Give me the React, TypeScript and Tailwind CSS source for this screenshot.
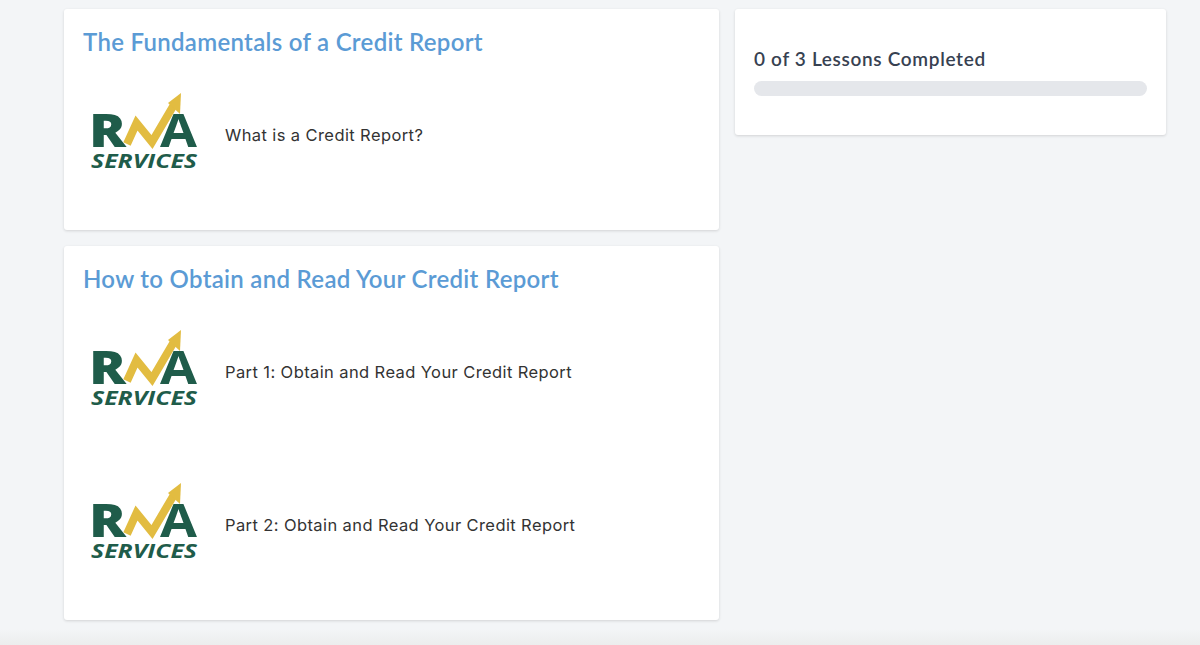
const RnaLogo = () => {
  return (
    <svg width="120" height="90" viewBox="0 0 120 90" className="shrink-0">
      <text x="5" y="56" fontFamily="'Open Sans', sans-serif" fontWeight="800" fontSize="46" fill="#1f5c4a" textLength="37" lengthAdjust="spacingAndGlyphs">R</text>
      <text x="76" y="56" fontFamily="'Open Sans', sans-serif" fontWeight="700" fontSize="46" fill="#1f5c4a" textLength="37" lengthAdjust="spacingAndGlyphs">A</text>
      <path d="M43 53 L52.5 32 L68 51 L91 12" fill="none" stroke="#e2bc41" strokeWidth="8" strokeLinejoin="miter" />
      <path d="M97 2 L96 23 L84 12 Z" fill="#e2bc41" />
      <text x="7" y="77" fontFamily="'Open Sans', sans-serif" fontWeight="700" fontStyle="italic" fontSize="20" fill="#1f5c4a" textLength="106" lengthAdjust="spacingAndGlyphs">SERVICES</text>
    </svg>
  );
};

const LessonRow = ({ title }: { title: string }) => {
  return (
    <div className="flex h-[153px] items-center gap-[21px] pl-[20px]">
      <RnaLogo />
      <span className="-mt-[1px] text-[16.5px] text-[#333333] font-['Inter',sans-serif] tracking-[0.4px]">{title}</span>
    </div>
  );
};

const SectionCard = ({ title, lessons }: { title: string; lessons: string[] }) => {
  return (
    <section className="rounded-[3px] bg-white shadow-[0_1px_3px_rgba(0,0,0,0.14)] pb-[18px]">
      <h2 className="h-[50px] pl-[19px] pt-[16px] text-[24px] leading-[34px] font-semibold text-[#5b9bd5] font-['Lato',sans-serif] tracking-[0.3px]">
        {title}
      </h2>
      {lessons.map((lesson) => (
        <LessonRow key={lesson} title={lesson} />
      ))}
    </section>
  );
};

export default function App() {
  return (
    <div className="flex h-[645px] w-[1200px] flex-col overflow-hidden bg-[#f3f5f7]">
      <main className="flex gap-[16px] pl-[64px] pt-[9px]">
        <div className="flex w-[655px] flex-col gap-[16px]">
          <SectionCard title="The Fundamentals of a Credit Report" lessons={["What is a Credit Report?"]} />
          <SectionCard
            title="How to Obtain and Read Your Credit Report"
            lessons={["Part 1: Obtain and Read Your Credit Report", "Part 2: Obtain and Read Your Credit Report"]}
          />
        </div>
        <aside className="h-[126px] w-[431px] rounded-[3px] bg-white px-[19px] pt-[36px] shadow-[0_1px_3px_rgba(0,0,0,0.14)]">
          <p className="h-[36px] text-[19px] leading-[28px] font-semibold text-[#374151] font-['Lato',sans-serif] tracking-[0.67px]">
            0 of 3 Lessons Completed
          </p>
          <div className="h-[15px] rounded-full bg-[#e5e7eb]" />
        </aside>
      </main>
      <div className="mt-auto h-[16px] bg-gradient-to-b from-[#f3f5f7] to-[#eceded]" />
    </div>
  );
}
